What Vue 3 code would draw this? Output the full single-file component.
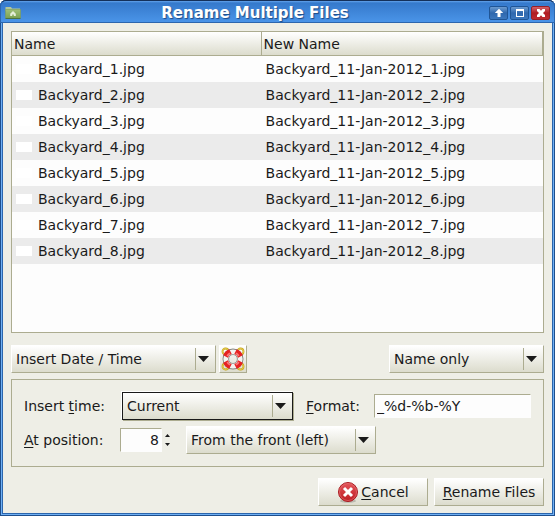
<script setup>
import { ref } from 'vue'

const files = Array.from({ length: 8 }, (_, i) => ({
  name: `Backyard_${i + 1}.jpg`,
  renamed: `Backyard_11-Jan-2012_${i + 1}.jpg`
}))
const mode = ref('Insert Date / Time')
const scope = ref('Name only')
const time = ref('Current')
const format = ref('_%d-%b-%Y')
const position = ref('8')
const side = ref('From the front (left)')
const ringAngles = [45, 135, 225, 315]

function step(delta) {
  position.value = String(Math.max(0, Number(position.value) + delta))
}
</script>

<template>
  <div class="window">
    <header class="titlebar">
      <svg class="folder" width="16" height="14" viewBox="0 0 16 14" aria-hidden="true">
        <defs>
          <linearGradient id="folderFill" x1="0" y1="0" x2="0" y2="1">
            <stop offset="0" stop-color="#9fbf78" />
            <stop offset="1" stop-color="#7da352" />
          </linearGradient>
        </defs>
        <path d="M.5 1H6l1 1.500h8V5H.5z" fill="#b3c79a" />
        <path d="M.5 3.500h15v8.500H.5z" fill="url(#folderFill)" stroke="#7d9c58" stroke-width=".6" />
        <path d="M.5 12.500h15" stroke="#4c7440" />
        <path d="M8 5l2.800 2.800V10H8.800V8.500H7.200V10h-2V7.800z" fill="#e6efd9" />
      </svg>
      <h1>Rename Multiple Files</h1>
      <div class="controls">
        <button type="button" class="ctl" aria-label="Shade">
          <svg width="10" height="10" viewBox="0 0 10 10"><path d="M5 .8L9.200 5H6.500v4h-3V5H.8z" fill="#fff" /></svg>
        </button>
        <button type="button" class="ctl" aria-label="Maximize">
          <svg width="10" height="10" viewBox="0 0 10 10"><path d="M1 1h8v8H1zM2 3v5h6V3z" fill="#fff" fill-rule="evenodd" /></svg>
        </button>
        <button type="button" class="ctl close" aria-label="Close">
          <svg width="10" height="10" viewBox="0 0 10 10"><path d="M1 1h2.500L5 2.800 6.500 1H9v2L7 5l2 2v2H6.500L5 7.200 3.500 9H1V7l2-2-2-2z" fill="#fff" /></svg>
        </button>
      </div>
    </header>

    <main class="body">
      <div class="list">
        <table>
          <colgroup><col class="col-name" /><col /></colgroup>
          <thead>
            <tr><th scope="col">Name</th><th scope="col">New Name</th></tr>
          </thead>
          <tbody>
            <tr v-for="f in files" :key="f.name">
              <td><span class="name"><i class="thumb"></i>{{ f.name }}</span></td>
              <td>{{ f.renamed }}</td>
            </tr>
          </tbody>
        </table>
      </div>

      <div class="toolbar">
        <div class="combo mode">
          <select v-model="mode" aria-label="Rename operation"><option>Insert Date / Time</option></select>
        </div>
        <button type="button" class="btn help" aria-label="Help">
          <svg width="24" height="24" viewBox="0 0 24 24">
            <g fill="none">
              <g stroke="#c4a117" stroke-width="1.800">
                <circle cx="4.500" cy="4.500" r="3" /><circle cx="19.500" cy="4.500" r="3" />
                <circle cx="4.500" cy="19.500" r="3" /><circle cx="19.500" cy="19.500" r="3" />
              </g>
              <g stroke="#eed95c" stroke-width=".8">
                <circle cx="4.500" cy="4.500" r="3" /><circle cx="19.500" cy="4.500" r="3" />
                <circle cx="4.500" cy="19.500" r="3" /><circle cx="19.500" cy="19.500" r="3" />
              </g>
              <circle cx="12" cy="12" r="7.200" stroke="#85857f" stroke-width="6.600" />
              <circle cx="12" cy="12" r="7.200" stroke="#f4f4f1" stroke-width="4.800" />
              <path
                v-for="a in ringAngles" :key="a"
                d="M16.500 9.300A5.200 5.200 0 0 1 16.500 14.700L21.500 16.300A10.400 10.400 0 0 0 21.500 7.700z"
                fill="#e62222" :transform="`rotate(${a} 12 12)`"
              />
              <path
                v-for="a in ringAngles" :key="'s' + a"
                d="M17.300 10.300A5.500 5.500 0 0 1 17.300 13.700L19 14.200A7.400 7.400 0 0 0 19 9.800z"
                fill="#f77a7a" :transform="`rotate(${a} 12 12)`"
              />
            </g>
          </svg>
        </button>
        <div class="combo scope">
          <select v-model="scope" aria-label="Apply to"><option>Name only</option></select>
        </div>
      </div>

      <section class="options">
        <div class="row">
          <label class="lead" for="time">Insert <u>t</u>ime:</label>
          <div class="combo time focused">
            <select id="time" v-model="time"><option>Current</option></select>
          </div>
          <label class="format-label" for="format"><u>F</u>ormat:</label>
          <input id="format" v-model="format" class="entry" type="text" />
        </div>
        <div class="row">
          <label class="lead" for="position"><u>A</u>t position:</label>
          <div class="spin">
            <input id="position" v-model="position" class="entry" type="text" inputmode="numeric" />
            <div class="steps">
              <button type="button" aria-label="Increase" @click="step(1)"></button>
              <button type="button" class="down" aria-label="Decrease" @click="step(-1)"></button>
            </div>
          </div>
          <div class="combo side">
            <select v-model="side" aria-label="Count position from"><option>From the front (left)</option></select>
          </div>
        </div>
      </section>

      <footer class="actions">
        <button type="button" class="btn">
          <svg width="22" height="22" viewBox="0 0 22 22" aria-hidden="true">
            <defs>
              <linearGradient id="stopFill" x1="0" y1="0" x2="0" y2="1">
                <stop offset="0" stop-color="#e4555a" />
                <stop offset="1" stop-color="#bd1c22" />
              </linearGradient>
            </defs>
            <ellipse cx="11" cy="20" rx="8" ry="1.800" fill="#b9b9ae" />
            <circle cx="11" cy="11" r="9.500" fill="url(#stopFill)" stroke="#a91a20" />
            <circle cx="11" cy="11" r="8.500" fill="none" stroke="#e8777a" stroke-opacity=".6" />
            <path d="M7 7l8 8M15 7l-8 8" stroke="#fff" stroke-width="3" />
          </svg>
          <span><u>C</u>ancel</span>
        </button>
        <button type="button" class="btn"><span><u>R</u>ename Files</span></button>
      </footer>
    </main>
  </div>
</template>

<style>
body {
  background: #fff;
}
</style>

<style scoped>
* {
  box-sizing: border-box;
}
.window {
  display: flex;
  flex-direction: column;
  min-height: 100vh;
  padding: 0 3px 3px;
  border-radius: 6px 6px 0 0;
  background: #3a7fd0;
  box-shadow: inset 0 0 0 1px #1f4f8c, inset 0 0 0 2px #6fb0f5, inset 0 0 0 3px #2c66ad;
  color: #1a1a1a;
  font: 14px/18px "DejaVu Sans", sans-serif;
}
.titlebar {
  display: flex;
  align-items: center;
  height: 23px;
  margin: 0 -3px;
  padding: 2px 4px 0;
  border-radius: 6px 6px 0 0;
  border: 1px solid #2c66ad;
  border-top-color: #14305a;
  background: linear-gradient(#63a4ec 0, #3579cb 2px, #4a94e8 100%);
}
.folder {
  flex: none;
}
h1 {
  flex: 1;
  margin: 0;
  color: #fff;
  font-size: 15px;
  line-height: 18px;
  text-align: center;
  text-shadow: 1px 1px 1px #1d4a86;
}
.controls {
  display: flex;
  gap: 2px;
}
.ctl {
  display: flex;
  align-items: center;
  justify-content: center;
  width: 19px;
  height: 14px;
  padding: 0;
  border: 1px solid #1f5596;
  border-radius: 2px;
  background: linear-gradient(#6c9bd0, #2f68ae 50%, #3b77bd);
}
.ctl.close {
  border-color: #981f27;
  background: linear-gradient(#d2636a, #b01c22 50%, #bd2a30);
}
.body {
  display: flex;
  flex: 1;
  flex-direction: column;
  padding: 8px 8px 7px;
  background: #eeeee6;
}
.list {
  flex: 1;
  border: 1px solid #acac90;
  background: #fdfdfd;
}
table {
  width: 100%;
  border-collapse: separate;
  border-spacing: 0;
  table-layout: fixed;
}
.col-name {
  width: 47%;
}
th {
  height: 24px;
  padding: 0 2px;
  border-right: 1px solid #acac90;
  border-bottom: 1px solid #acac90;
  background: linear-gradient(#fff, #dcdccd);
  font-weight: 400;
  text-align: left;
}
td {
  height: 26px;
  padding: 0 4px;
}
tbody tr:nth-child(even) {
  background: #ebebeb;
}
.name {
  display: flex;
  align-items: center;
  gap: 6px;
}
.thumb {
  width: 16px;
  height: 10px;
  background: #fff;
}
.toolbar {
  display: flex;
  gap: 3px;
  margin: 12px 0 6px;
}
.combo {
  position: relative;
  height: 28px;
}
.combo select,
.btn {
  height: 28px;
  margin: 0;
  border: 1px solid;
  border-color: #fff #acac90 #acac90 #fff;
  border-radius: 0;
  background: linear-gradient(#fff, #dcdccd);
  color: inherit;
  font: inherit;
}
.combo select {
  width: 100%;
  padding: 0 26px 0 4px;
  appearance: none;
  outline: none;
}
.combo::before,
.combo::after {
  position: absolute;
  content: "";
  pointer-events: none;
}
.combo::before {
  top: 3px;
  right: 20px;
  bottom: 3px;
  width: 1px;
  background: #acac90;
}
.combo::after {
  top: 11px;
  right: 7px;
  width: 11px;
  height: 6px;
  background: #1a1a1a;
  clip-path: polygon(0 0, 100% 0, 50% 100%);
}
.combo.focused select {
  border-color: #1a1a1a;
  box-shadow: -1px -1px 0 #fff, 1px 1px 0 #acac90;
}
.mode {
  width: 205px;
}
.scope {
  width: 155px;
  margin-left: auto;
}
.help {
  width: 28px;
  padding: 1px;
}
.help svg {
  display: block;
}
.options {
  display: flex;
  flex-direction: column;
  gap: 6px;
  padding: 12px;
  border: 1px solid #acac90;
}
.row {
  display: flex;
  align-items: center;
}
.lead {
  width: 96px;
}
.time {
  width: 171px;
  margin-left: 2px;
}
.format-label {
  margin: 0 14px 0 13px;
}
.entry {
  min-width: 0;
  height: 24px;
  padding: 0 2px;
  border: 1px solid;
  border-color: #acac90 #fdfdfd #fdfdfd #acac90;
  background: #fdfdfd;
  color: inherit;
  font: inherit;
  outline: none;
}
.row > .entry {
  flex: 1;
}
.spin {
  display: flex;
}
.spin .entry {
  width: 42px;
  text-align: right;
}
.steps {
  display: flex;
  flex-direction: column;
  justify-content: center;
  gap: 6px;
  width: 10px;
  margin-right: 14px;
  padding-left: 3px;
}
.steps button {
  width: 5px;
  height: 3px;
  padding: 0;
  border: 0;
  background: #1a1a1a;
  clip-path: polygon(50% 0, 100% 100%, 0 100%);
}
.steps .down {
  clip-path: polygon(0 0, 100% 0, 50% 100%);
}
.side {
  width: 190px;
}
.actions {
  display: flex;
  gap: 6px;
  justify-content: flex-end;
  margin-top: 11px;
}
.actions .btn {
  display: flex;
  align-items: center;
  justify-content: center;
  gap: 2px;
  width: 110px;
  padding: 0;
  white-space: nowrap;
}
u {
  text-underline-offset: 2px;
}
</style>
